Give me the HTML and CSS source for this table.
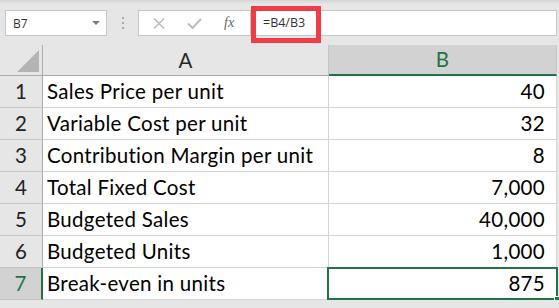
FILE: index.html
```html
<!DOCTYPE html>
<html>
<head>
    <meta charset="UTF-8">
    <title>Break-even</title>
    <link rel="stylesheet" href="styles.css">
</head>
<body>
    <div class="toolbar">
        <div class="namebox">
            <span>B7</span>
            <span class="caret"></span>
        </div>
        <div class="grip"><i></i><i></i><i></i></div>
        <div class="fxbox">
            <svg class="btn" width="12" height="11" viewBox="0 0 12 11">
                <path d="M1 0.5 L11 10.5 M11 0.5 L1 10.5" stroke="#bdbdbd" stroke-width="1.6" fill="none"/>
            </svg>
            <svg class="btn" width="15" height="11" viewBox="0 0 15 11">
                <path d="M1 5.5 L5.5 10 L14 1" stroke="#bdbdbd" stroke-width="2" fill="none"/>
            </svg>
            <span class="fx">fx</span>
        </div>
        <div class="formula">
            <span>=B4/B3</span>
            <div class="mark"></div>
        </div>
    </div>

    <div class="sheet">
        <div class="corner"><span class="tri"></span></div>
        <div class="colhead">A</div>
        <div class="colhead active">B</div>

        <div class="rowhead">1</div>
        <div class="cell">Sales Price per unit</div>
        <div class="cell num">40</div>

        <div class="rowhead">2</div>
        <div class="cell">Variable Cost per unit</div>
        <div class="cell num">32</div>

        <div class="rowhead">3</div>
        <div class="cell">Contribution Margin per unit</div>
        <div class="cell num">8</div>

        <div class="rowhead">4</div>
        <div class="cell">Total Fixed Cost</div>
        <div class="cell num">7,000</div>

        <div class="rowhead">5</div>
        <div class="cell">Budgeted Sales</div>
        <div class="cell num">40,000</div>

        <div class="rowhead">6</div>
        <div class="cell">Budgeted Units</div>
        <div class="cell num">1,000</div>

        <div class="rowhead active">7</div>
        <div class="cell">Break-even in units</div>
        <div class="cell num selected">875<span class="handle"></span></div>
    </div>
</body>
</html>
```

FILE: styles.css
```css
* {
    box-sizing: border-box;
}

body {
    margin: 0;
    background: #e6e6e6;
    font-family: Lato, 'Liberation Sans', sans-serif;
    overflow: hidden;
}

/* formula bar strip */
.toolbar {
    display: flex;
    align-items: flex-start;
    height: 45px;
    padding-top: 10px;
    background: linear-gradient(#d4d4d4, #e6e6e6 4px);
    font-family: 'Open Sans', 'Noto Sans', sans-serif;
    font-size: 12px;
    color: #333;
}

.namebox {
    display: flex;
    align-items: center;
    justify-content: space-between;
    margin-left: 5px;
    width: 102px;
    height: 26px;
    padding: 0 6px 0 7px;
    background: #fff;
    border: 1px solid #c6c6c6;
}

.caret {
    width: 0;
    height: 0;
    border-left: 4px solid transparent;
    border-right: 4px solid transparent;
    border-top: 4px solid #7a7a7a;
}

.grip {
    width: 31px;
    height: 26px;
    display: flex;
    flex-direction: column;
    align-items: center;
    justify-content: center;
    gap: 3px;
}

.grip i {
    width: 2px;
    height: 2px;
    background: #a8a8a8;
}

.fxbox {
    display: flex;
    align-items: center;
    width: 113px;
    height: 26px;
    padding-left: 14px;
    background: #fff;
    border: 1px solid #c6c6c6;
}

.fxbox .btn {
    margin-right: 22px;
}

.fx {
    font-family: 'Liberation Serif', serif;
    font-style: italic;
    font-size: 14px;
    color: #666;
}

.formula {
    position: relative;
    flex: 1;
    height: 26px;
    margin-right: 2px;
    padding-left: 12px;
    line-height: 24px;
    font-size: 12.5px;
    background: #fff;
    border: 1px solid #c6c6c6;
    border-left: none;
}

/* red highlight round the formula */
.formula .mark {
    position: absolute;
    left: 0;
    top: -5px;
    width: 70px;
    height: 37px;
    border: 5px solid #f03c45;
}

/* worksheet grid */
.sheet {
    display: grid;
    grid-template-columns: 43px 286px 228px;
    grid-template-rows: 31px repeat(7, 32px);
    font-size: 20.5px;
    letter-spacing: 0.3px;
}

.corner,
.colhead {
    background: #e6e6e6;
    border-bottom: 1px solid #ababab;
    border-right: 1px solid #c4c4c4;
}

.corner {
    position: relative;
    border-right-color: #ababab;
}

.tri {
    position: absolute;
    right: 3px;
    bottom: 3px;
    width: 0;
    height: 0;
    border-left: 22px solid transparent;
    border-bottom: 22px solid #b4b4b4;
}

.colhead {
    text-align: center;
    line-height: 30px;
    color: #262626;
}

.colhead.active {
    background: #d2d2d2;
    color: #217346;
    border-bottom: 2px solid #217346;
    line-height: 29px;
}

.rowhead {
    background: #e6e6e6;
    border-right: 1px solid #ababab;
    border-bottom: 1px solid #c4c4c4;
    text-align: center;
    line-height: 31px;
    color: #222;
}

.rowhead.active {
    background: #d2d2d2;
    color: #217346;
    border-right: 2px solid #217346;
}

.cell {
    background: #fff;
    border-right: 1px solid #d4d4d4;
    border-bottom: 1px solid #d4d4d4;
    padding-left: 4px;
    line-height: 31px;
    color: #000;
    white-space: nowrap;
}

.cell.num {
    text-align: right;
    padding-right: 11px;
}

.cell.selected {
    position: relative;
}

.cell.selected::after {
    content: "";
    position: absolute;
    left: -2px;
    top: -1px;
    right: -2px;
    bottom: -1px;
    border: 2px solid #217346;
}

.handle {
    position: absolute;
    right: -4px;
    bottom: -3px;
    width: 6px;
    height: 6px;
    background: #217346;
    border: 1px solid #fff;
    z-index: 1;
}
```
